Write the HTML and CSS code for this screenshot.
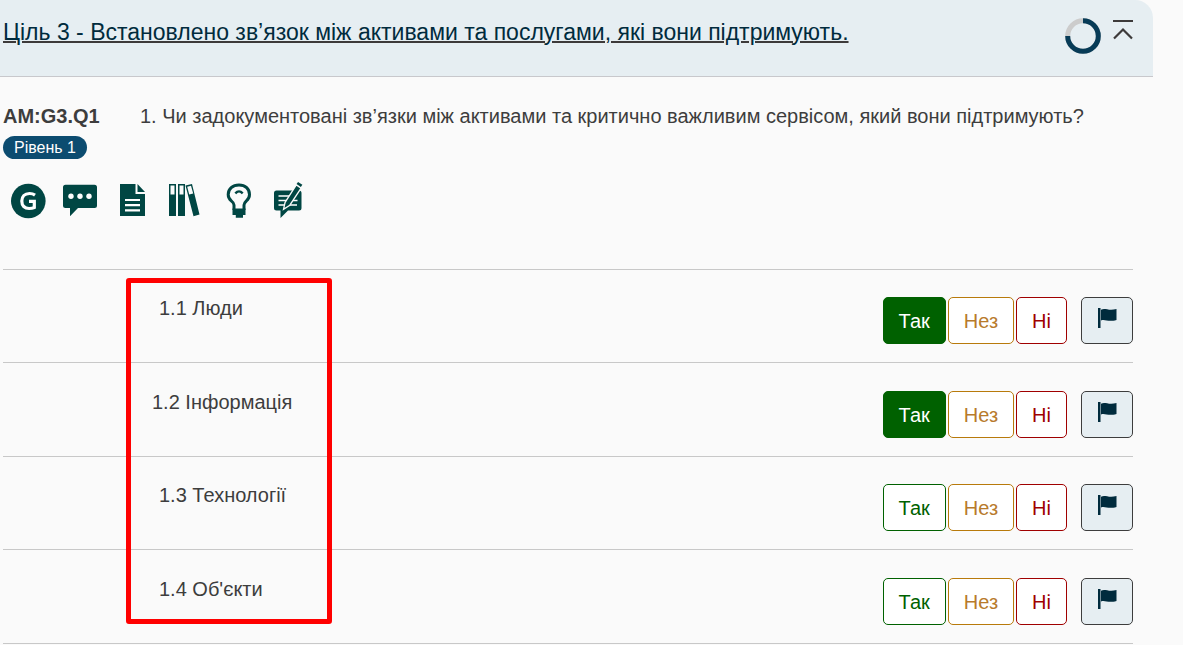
FILE: index.html
```html
<!DOCTYPE html>
<html lang="uk">
<head>
<meta charset="utf-8">
<meta name="viewport" content="width=device-width, initial-scale=1">
<title>Ціль 3</title>
<link rel="stylesheet" href="styles.css">
</head>
<body>
<main class="page">
  <header class="goal">
    <h1 class="goal-title"><a class="goal-link" href="#goal">Ціль 3 - Встановлено зв’язок між активами та послугами, які вони підтримують.</a></h1>
    <svg class="progress" viewBox="0 0 36 36" role="img" aria-label="75%">
      <circle cx="18" cy="18" r="15.3" fill="none" stroke="#cccccc" stroke-width="5"/>
      <path d="M18 2.7A15.3 15.3 0 1 1 2.7 18" fill="none" stroke="#073b57" stroke-width="5"/>
    </svg>
    <button class="collapse" type="button" aria-label="Згорнути">
      <svg class="collapse-icon" viewBox="0 0 20 20" aria-hidden="true"><path d="M0 1h20M1 18.500l9-9 9 9" fill="none" stroke="#3d3a3a" stroke-width="2.200"/></svg>
    </button>
  </header>

  <section class="question" id="goal">
    <div class="question-head">
      <div class="question-id">
        <strong class="code">AM:G3.Q1</strong>
        <span class="level">Рівень 1</span>
      </div>
      <p class="question-text">1. Чи задокументовані зв’язки між активами та критично важливим сервісом, який вони підтримують?</p>
    </div>

    <div class="tools">
      <button class="tool" type="button" aria-label="Керівництво">
        <svg viewBox="0 0 36 36" class="tool-icon"><circle cx="18.300" cy="18" r="17.300" fill="#004643"/><path d="M25 12.100C23.300 10.900 21.600 10.500 19.500 10.500c-4.900 0-7.700 3-7.700 7.600 0 4.700 2.800 7.400 7.300 7.400 2 0 3.900-.4 5.200-1V18.400H19" fill="none" stroke="#fff" stroke-width="3.200"/></svg>
      </button>
      <button class="tool" type="button" aria-label="Коментар">
        <svg viewBox="0 0 36 36" class="tool-icon"><path d="M3.500 1.700h29a2.500 2.500 0 0 1 2.500 2.500v18.300a2.500 2.500 0 0 1-2.500 2.500H16l-8 8.300V25H3.500A2.500 2.500 0 0 1 1 22.500V4.200a2.500 2.500 0 0 1 2.500-2.500z" fill="#004643"/><circle cx="9" cy="13.300" r="2.700" fill="#fff"/><circle cx="18" cy="13.300" r="2.700" fill="#fff"/><circle cx="27" cy="13.300" r="2.700" fill="#fff"/></svg>
      </button>
      <button class="tool" type="button" aria-label="Документи">
        <svg viewBox="0 0 36 36" class="tool-icon"><path d="M6 1h15.500v10H31v22H6zM23.500 1l7.500 8h-7.500z" fill="#004643"/><path d="M11 17h15M11 22.200h15M11 27.400h15" stroke="#fff" stroke-width="2.200"/></svg>
      </button>
      <button class="tool" type="button" aria-label="Посилання">
        <svg viewBox="0 0 36 36" class="tool-icon"><path fill-rule="evenodd" d="M3 1h7v32H3zM4.500 2.500v9h4v-9zM12 1h7v32h-7zM13.500 2.500v9h4v-9zM19.500 2.600l6.500-1.500L33.500 31.500l-6 1.700zM21.200 3.800l2 7.800 4-1-2.200-7.800z" fill="#004643"/></svg>
      </button>
      <button class="tool" type="button" aria-label="Спостереження">
        <svg viewBox="0 0 36 36" class="tool-icon"><path d="M16 27v-5c0-1.700-1-2.700-2.700-4.100-2.100-1.700-3.100-3.700-3.100-6.300C10.200 6 14.600 2 21 2s10.500 4 10.500 9.600c0 2.400-1 4.600-3.100 6.300C26.900 19.300 26 20.300 26 22v5" fill="none" stroke="#004643" stroke-width="3"/><path d="M17.300 10.300q3.700-3.800 7.400 0" fill="none" stroke="#004643" stroke-width="2.400"/><path d="M14.500 25.600h13V32H25v2.700h-7.200V32h-3.300z" fill="#004643"/></svg>
      </button>
      <button class="tool" type="button" aria-label="Відгук">
        <svg viewBox="0 0 36 36" class="tool-icon"><path d="M6.500 7.500h22.500a2.500 2.500 0 0 1 2.500 2.500v15a2.500 2.500 0 0 1-2.500 2.500H18L10.500 35v-7.500h-4A2.500 2.500 0 0 1 4 25V10a2.500 2.500 0 0 1 2.500-2.500z" fill="#004643"/><path d="M8.500 13h11M8.500 17.500h8M8.500 22h6M22.500 17.500h5M19 22h8" stroke="#fff" stroke-width="1.500"/><path d="M13.500 26.300l1.600-7L26.300 2l4.800 3.200L19.800 22.200z" fill="#004643" stroke="#fafafa" stroke-width="1.300"/><path d="M27.300 0l4.300 2.900" stroke="#004643" stroke-width="2.700"/></svg>
      </button>
    </div>

    <div class="items">
      <div class="item">
        <span class="item-label">1.1 Люди</span>
        <div class="answers">
          <button class="answer yes" type="button" aria-pressed="true">Так</button>
          <button class="answer unanswered" type="button" aria-pressed="false">Нез</button>
          <button class="answer no" type="button" aria-pressed="false">Ні</button>
          <button class="flag" type="button" aria-label="Позначити"><svg class="flag-icon" viewBox="0 0 20 20" aria-hidden="true"><path d="M1 0h2.500v20H1zM4 1.800c4-2.400 7 1.400 15.500-.8V12c-8.500 2.400-11.500-1.200-15.500.5z" fill="#002b3d"/></svg></button>
        </div>
      </div>
      <div class="item">
        <span class="item-label outdent">1.2 Інформація</span>
        <div class="answers">
          <button class="answer yes" type="button" aria-pressed="true">Так</button>
          <button class="answer unanswered" type="button" aria-pressed="false">Нез</button>
          <button class="answer no" type="button" aria-pressed="false">Ні</button>
          <button class="flag" type="button" aria-label="Позначити"><svg class="flag-icon" viewBox="0 0 20 20" aria-hidden="true"><path d="M1 0h2.500v20H1zM4 1.800c4-2.400 7 1.400 15.500-.8V12c-8.500 2.400-11.500-1.200-15.500.5z" fill="#002b3d"/></svg></button>
        </div>
      </div>
      <div class="item">
        <span class="item-label">1.3 Технології</span>
        <div class="answers">
          <button class="answer yes" type="button" aria-pressed="false">Так</button>
          <button class="answer unanswered" type="button" aria-pressed="false">Нез</button>
          <button class="answer no" type="button" aria-pressed="false">Ні</button>
          <button class="flag" type="button" aria-label="Позначити"><svg class="flag-icon" viewBox="0 0 20 20" aria-hidden="true"><path d="M1 0h2.500v20H1zM4 1.800c4-2.400 7 1.400 15.500-.8V12c-8.500 2.400-11.500-1.200-15.500.5z" fill="#002b3d"/></svg></button>
        </div>
      </div>
      <div class="item">
        <span class="item-label">1.4 Об'єкти</span>
        <div class="answers">
          <button class="answer yes" type="button" aria-pressed="false">Так</button>
          <button class="answer unanswered" type="button" aria-pressed="false">Нез</button>
          <button class="answer no" type="button" aria-pressed="false">Ні</button>
          <button class="flag" type="button" aria-label="Позначити"><svg class="flag-icon" viewBox="0 0 20 20" aria-hidden="true"><path d="M1 0h2.500v20H1zM4 1.800c4-2.400 7 1.400 15.500-.8V12c-8.500 2.400-11.500-1.200-15.500.5z" fill="#002b3d"/></svg></button>
        </div>
      </div>
      <div class="highlight" aria-hidden="true"></div>
    </div>
  </section>
</main>
</body>
</html>
```

FILE: styles.css
```css
* {
  box-sizing: border-box;
}

body {
  margin: 0;
  background: #fafafa;
  color: #3d3d3d;
  font: 20px/24px "Liberation Sans", Arial, sans-serif;
}

button {
  font: inherit;
  cursor: pointer;
}

.page {
  margin-right: 30px;
}

.goal {
  display: flex;
  align-items: flex-start;
  padding: 18px 20px 22px 3px;
  background: #e6eef2;
  border-bottom: 1px solid #c8c8cc;
  border-top-right-radius: 18px;
}

.goal-title {
  flex: 1;
  margin: 0;
  font-size: 23px;
  font-weight: 400;
  line-height: 28px;
}

.goal-link {
  color: #002b3d;
  text-decoration: underline;
  text-decoration-color: #3d3a3a;
  text-decoration-thickness: 2px;
}

.progress {
  width: 36px;
  height: 36px;
}

.collapse {
  margin-left: 12px;
  padding: 2px 0;
  border: 0;
  background: none;
}

.collapse-icon {
  display: block;
  width: 20px;
  height: 20px;
}

.question {
  padding: 27px 20px 0 3px;
}

.question-head {
  display: flex;
}

.question-id {
  display: flex;
  flex-direction: column;
  align-items: flex-start;
  gap: 8px;
  width: 137px;
}

.level {
  padding: 0 11px;
  border-radius: 12px;
  background: #0c4c70;
  color: #fff;
  font-size: 16px;
  line-height: 23px;
}

.question-text {
  flex: 1;
  margin: 0;
}

.tools {
  display: flex;
  gap: 16px;
  padding: 24px 7px 50px;
}

.tool {
  padding: 0;
  border: 0;
  background: none;
}

.tool-icon {
  display: block;
  width: 36px;
  height: 36px;
  overflow: visible;
}

.items {
  position: relative;
  border-top: 1px solid #c8c8c8;
}

.item {
  display: flex;
  justify-content: space-between;
  align-items: flex-start;
  padding: 27px 0 18px;
  border-bottom: 1px solid #c8c8c8;
}

.item:nth-child(even) {
  padding-top: 28px;
}

.item-label {
  padding-left: 156px;
  line-height: 22px;
}

.outdent {
  padding-left: 149px;
}

.answers {
  display: flex;
  gap: 2px;
}

.answer {
  height: 47px;
  padding: 0 15px;
  border: 1px solid;
  border-radius: 5px;
  background: #fff;
}

.yes {
  border-color: #006100;
  color: #006100;
}

.yes[aria-pressed="true"] {
  background: #006100;
  color: #fff;
}

.unanswered {
  border-color: #b87a0b;
  color: #b87a2c;
}

.no {
  border-color: #a00000;
  color: #a00000;
}

.flag {
  width: 52px;
  height: 47px;
  margin-left: 12px;
  padding: 0 15px 6px;
  border: 1px solid #3d3d3d;
  border-radius: 5px;
  background: #e6eef2;
}

.flag-icon {
  display: block;
  width: 20px;
  height: 20px;
}

.highlight {
  position: absolute;
  top: 8px;
  bottom: 20px;
  left: 123px;
  width: 206px;
  border: 5px solid #ff0000;
  border-radius: 3px;
  pointer-events: none;
}
```
